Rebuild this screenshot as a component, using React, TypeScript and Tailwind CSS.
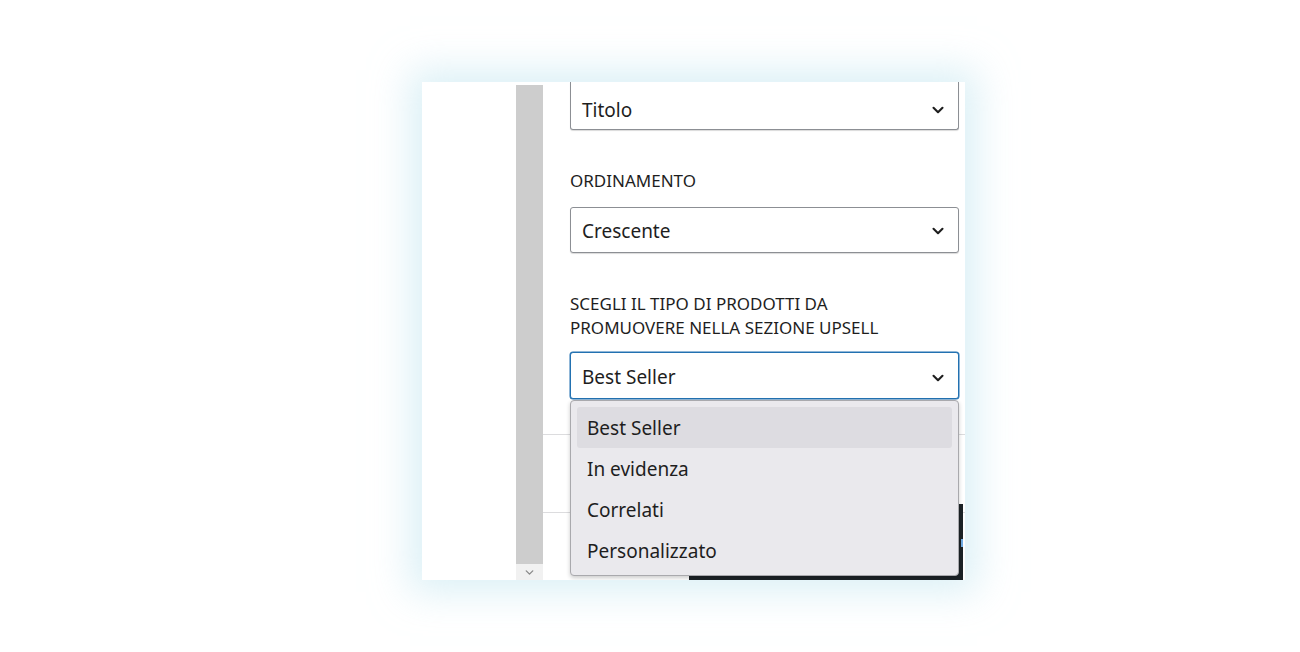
import { ChevronDown } from "lucide-react";

const options = ["Best Seller", "In evidenza", "Correlati", "Personalizzato"];

const Select = ({ value, focused = false, cut = false }: { value: string; focused?: boolean; cut?: boolean }) => (
  <div
    className={
      "flex items-center justify-between pl-[11px] pr-[11px] bg-white rounded-[3px] " +
      (focused
        ? "h-[47px] pt-[4px] border border-[#2271b1] shadow-[0_0_0_0.5px_#2271b1]"
        : cut
        ? "h-[48px] pt-[9px] border border-t-0 border-[#8c8f94] rounded-t-none shadow-[0_1px_1px_rgba(0,0,0,0.15)]"
        : "h-[46px] pt-[2px] border border-[#8c8f94] shadow-[0_1px_1px_rgba(0,0,0,0.15)]")
    }
  >
    <span className="text-[19px] text-[#1e1e1e] leading-none">{value}</span>
    <ChevronDown size={18} strokeWidth={2.8} className="text-[#1e1e1e]" />
  </div>
);

export default function App() {
  return (
    <div
      className="w-[1300px] h-[652px] bg-white pl-[422px] pt-[82px]"
      style={{ fontFamily: '"Noto Sans", "Open Sans", sans-serif' }}
    >
      <div className="w-[543px] h-[498px] bg-white flex shadow-[0_0_36px_12px_rgba(195,230,240,0.6)]">
        {/* left blank area */}
        <div className="w-[94px]" />

        {/* scrollbar */}
        <div className="w-[27px] flex flex-col pt-[3px]">
          <div className="flex-1 bg-[#cdcdcd]" />
          <div className="h-[16px] bg-[#f1f1f1] flex items-center justify-center">
            <ChevronDown size={13} strokeWidth={2.5} className="text-[#8a8a8a]" />
          </div>
        </div>

        {/* content */}
        <div className="flex-1 relative overflow-hidden">
          <div className="pl-[27px] pr-[6px]">
            <Select value="Titolo" cut />

            <div className="mt-[41px] text-[17px] leading-[20px] text-[#1e1e1e]">ORDINAMENTO</div>
            <div className="mt-[16px]">
              <Select value="Crescente" />
            </div>

            <div className="mt-[39px] text-[17px] leading-[24px] text-[#1e1e1e]">
              SCEGLI IL TIPO DI PRODOTTI DA
              <br />
              PROMUOVERE NELLA SEZIONE UPSELL
            </div>
            <div className="mt-[12px] relative z-10">
              <Select value="Best Seller" focused />

              {/* open dropdown */}
              <div className="absolute left-0 right-0 top-full mt-[1px] h-[176px] bg-[#eae9ed] border border-[#a9a9ad] rounded-[4px] shadow-[0_2px_4px_rgba(0,0,0,0.2)] px-[6px] pt-[6px]">
                {options.map((o, i) => (
                  <div
                    key={o}
                    className={
                      "h-[41px] flex items-center pl-[10px] pt-[1px] text-[19px] text-[#1e1e1e] rounded-[3px] " +
                      (i === 0 ? "bg-[#dddce1]" : "")
                    }
                  >
                    {o}
                  </div>
                ))}
              </div>
            </div>
          </div>

          {/* content behind dropdown */}
          <div className="mt-[35px] border-t border-[#dcdcde] h-[78px]" />
          <div className="border-t border-[#dcdcde] flex justify-end">
            <div className="mt-[-9px] w-[274px] h-[77px] bg-[#1d2327] mr-[2px] flex items-center justify-end">
              <div className="w-[2px] h-[8px] bg-[#72aee6]" />
            </div>
          </div>
        </div>
      </div>
    </div>
  );
}
